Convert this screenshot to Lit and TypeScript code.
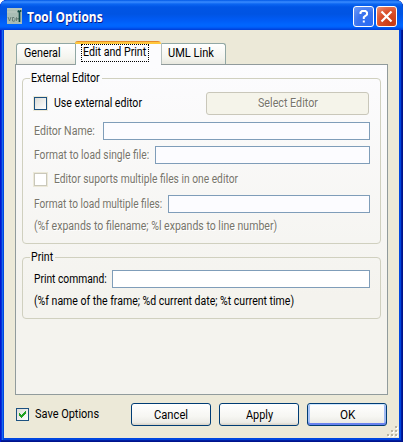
import { LitElement, html, css, svg } from "lit";
import { customElement, property, query, state } from "lit/decorators.js";
import { classMap } from "lit/directives/class-map.js";

/** One line of text, condensed or widened to a given width. */
@customElement("fit-text")
class FitText extends LitElement {
  @property() text = "";
  @property({ type: Number }) w = 50;
  @state() scale = 1;
  @query("span") span!: HTMLSpanElement;
  static styles = css`
    :host { display: block; flex: none; white-space: pre; height: 16px; line-height: 16px; }
    span { display: inline-block; transform-origin: 0 50%; }
  `;
  firstUpdated() {
    this.style.width = `${this.w}px`;
    const natural = this.span.offsetWidth;
    if (natural) this.scale = this.w / natural;
  }
  render() {
    return html`<span style="transform: scaleX(${this.scale})">${this.text}</span>`;
  }
}

@customElement("xp-check")
class XpCheck extends LitElement {
  @property({ type: Boolean }) checked = false;
  @property({ type: Boolean }) disabled = false;
  static styles = css`
    :host { display: block; flex: none; width: 13px; height: 13px; }
    .box { box-sizing: border-box; width: 13px; height: 13px; border: 1px solid #1c5180;
      background: linear-gradient(135deg, #dcdcd7, #fff); outline: 1px solid #ece9d8; }
    .off { border-color: #cac8bb; background: #fff; }
    svg { display: block; }
  `;
  render() {
    return html`<div class=${classMap({ box: true, off: this.disabled })}>
      ${this.checked
        ? html`<svg width="11" height="11" shape-rendering="crispEdges">
            ${svg`<path fill="#21a121" d="M2 4h1v3h-1zM3 5h1v3h-1zM4 6h1v3h-1zM5 5h1v3h-1zM6 4h1v3h-1zM7 3h1v3h-1zM8 2h1v3h-1z"/>`}
          </svg>`
        : ""}
    </div>`;
  }
}

@customElement("app-root")
class AppRoot extends LitElement {
  static styles = css`
    :host { display: block; width: 403px; height: 442px; background: #fff; overflow: hidden;
      font-family: Roboto, "Liberation Sans", sans-serif; font-size: 12.5px; color: #000; }
    * { box-sizing: border-box; }
    .window { width: 403px; height: 442px; border-radius: 7px 7px 0 0; overflow: hidden;
      background: #0046e0; display: flex; flex-direction: column;
      box-shadow: inset 1px 0 #0019cf, inset -1px 0 #00138c, inset 0 -1px #00138c, inset -2px 0 #001ea0, inset 0 -2px #001ea0, inset 2px 0 #0831d9, inset 3px 0 #166aee; }
    .title { height: 30px; flex: none; display: flex; padding: 0 6px 0 6px; color: #fff;
      background: linear-gradient(#0058e6 0, #3a8cff 2px, #0b66f2 4px, #0055e5 7px, #0054e3 14px, #005bf5 20px, #0066ff 25px, #0061fc 27px, #003dd7 30px);
      font: bold 14px "Open Sans", "Noto Sans", sans-serif; text-shadow: 1px 1px #0a1883; }
    .logo { display: block; margin: 8px 5px 0 1px; }
    .title fit-text { margin: 9px auto 0 0; }
    .cap { width: 21px; height: 21px; margin: 6px 0 0 2px; border: 1px solid #fff; border-radius: 3px;
      background: radial-gradient(circle at 75% 85%, #2a6cf5, #3b73ee 50%, #6f9bf7 100%); }
    .cap.close { background: radial-gradient(circle at 75% 85%, #c83a12, #da4f2b 55%, #ee9276 100%); }
    .cap svg { display: block; }
    .client { width: 395px; height: 408px; margin-left: 4px; background: #ece9d8; padding: 11px 11px 0;
      display: flex; flex-direction: column; }
    .tabs { height: 23px; display: flex; align-items: flex-end; padding-left: 1px; }
    .tab { height: 21px; border: 1px solid #91a7a4; border-bottom: 0; border-radius: 3px 3px 0 0;
      background: linear-gradient(#fff, #f4f4ee 70%, #e8e8df); padding: 1px 0 0 7px; }
    .general { width: 59px; border-right: 0; border-radius: 3px 0 0 0; }
    .uml { width: 65px; border-left-color: #b5bfbd; border-radius: 0 3px 0 0; padding-left: 6px; }
    .active { width: 86px; height: 24px; margin-bottom: -1px; z-index: 1; position: relative; background: #fcfcfe;
      border: solid #91a7a4; border-width: 0 0 0 1px; padding: 3px 0 0 5px; }
    .active::before { content: ""; position: absolute; left: -1px; right: 0; top: 0; height: 3px;
      background: linear-gradient(#e68b2c 0 1px, #ffc73c 1px); border-radius: 3px 3px 0 0; }
    .focus { width: 68px; height: 18px; border: 1px dotted #000; padding: 0 0 0 1px; }
    .focus fit-text { margin-top: -1px; }
    .panel { width: 373px; height: 331px; border: 1px solid #919b9c;
      background: linear-gradient(#fcfcfe, #f4f3ee 70%, #f4f3ee); padding: 13px 6px 0; }
    .group { width: 359px; border: 1px solid #d0d0bf; border-radius: 4px; padding: 0 10px 0 11px; }
    .first { height: 166px; }
    .second { height: 62px; margin-top: 13px; }
    .legend { display: flex; width: max-content; height: 16px; margin: -9px 0 0 -4px; padding: 0 2px 0 1px; background: #fbfbfc; }
    .second .legend { background: #f5f4f0; }
    .row { display: flex; align-items: center; height: 24px; }
    .gray { color: #77756b; text-shadow: 1px 1px #fff; }
    .row fit-text { margin-right: auto; }
    .check fit-text { margin-left: 7px; }
    .field { height: 18px; border: 1px solid #7f9db9; background: #fcfcff; flex: none; }
    .f1 { width: 267px; } .f2 { width: 215px; } .f3 { width: 202px; }
    .f4 { width: 258px; background: #fff; }
    .button { height: 23px; border: 1px solid #003c74; border-radius: 3px; flex: none;
      background: linear-gradient(#fff, #f6f6f2 60%, #ecebe6 88%, #d6d0c5);
      display: flex; align-items: center; justify-content: center; width: 80px; }
    .button fit-text { margin: 0; }
    .select { width: 163px; border-color: #c9c7ba; background: #f5f4ea; margin-right: 1px; }
    .select fit-text, .check .select fit-text { margin: 0; }
    .default { box-shadow: inset 0 1px #cee7ff, inset 0 -2px #6982ee, inset 2px 0 #a9c4f5, inset -2px 0 #a0baf2; }
    .footer { height: 43px; display: flex; padding: 8px 0 0 1px; }
    .footer xp-check { margin-top: 5px; }
    .footer > fit-text { margin: 3px 32px 0 6px; }
    .footer .button + .button { margin-left: 8px; }
    .grip { position: absolute; left: 387px; top: 426px; }
    .use { margin-top: 1px; height: 32px; }
    .multiple { margin-top: 1px; }
    .command { margin-top: 2px; }
    .hint { margin-top: -2px; }
  `;

  render() {
    return html`<div class="window">
      <div class="title">
        <svg class="logo" width="15" height="16">
          <rect width="15" height="16" fill="#a9bdb5" />
          <path d="M0 1h15M0 4h10" stroke="#bdcac3" />
          <path d="M1 9l1.5 4L4 9M5.5 13V9.5h1.5l1 1v2l-1 .8zM9.5 13V9.5l1.500 2L12 10" fill="none" stroke="#596f69" stroke-width=".8" />
          <path d="M10.500 3.500h1.500M12.500 3v11M13.500 2v2M11 2.500l1 1.500" fill="none" stroke="#144b46" stroke-width="1.700" />
        </svg>
        <fit-text text="Tool Options" w="76"></fit-text>
        <div class="cap"><svg width="19" height="19"><path d="M6.500 7V5.500l1.500-1.500h3.500l1.500 1.500v2L9.800 10.200V12M9.800 13.500v2" fill="none" stroke="#fff" stroke-width="2" /></svg></div>
        <div class="cap close"><svg width="19" height="19"><path d="M4.500 4.500l10 10M14.500 4.500l-10 10" stroke="#fff" stroke-width="2.200" /></svg></div>
      </div>
      <div class="client">
        <div class="tabs">
          <div class="tab general"><fit-text text="General" w="37"></fit-text></div>
          <div class="tab active"><div class="focus"><fit-text text="Edit and Print" w="63"></fit-text></div></div>
          <div class="tab uml"><fit-text text="UML Link" w="46"></fit-text></div>
        </div>
        <div class="panel">
          <div class="group first">
            <div class="legend"><fit-text text="External Editor" w="69"></fit-text></div>
            <div class="row check use">
              <xp-check></xp-check><fit-text text="Use external editor" w="88"></fit-text>
              <div class="button select gray"><fit-text text="Select Editor" w="60"></fit-text></div>
            </div>
            <div class="row gray"><fit-text text="Editor Name:" w="61"></fit-text><div class="field f1"></div></div>
            <div class="row gray"><fit-text text="Format to load single file:" w="115"></fit-text><div class="field f2"></div></div>
            <div class="row check gray"><xp-check disabled></xp-check><fit-text text="Editor suports multiple files in one editor" w="184"></fit-text></div>
            <div class="row gray multiple"><fit-text text="Format to load multiple files:" w="128"></fit-text><div class="field f3"></div></div>
            <div class="row gray hint"><fit-text text="(%f expands to filename; %l expands to line number)" w="243"></fit-text></div>
          </div>
          <div class="group second">
            <div class="legend"><fit-text text="Print" w="22"></fit-text></div>
            <div class="row command"><fit-text text="Print command:" w="73"></fit-text><div class="field f4"></div></div>
            <div class="row hint"><fit-text text="(%f name of the frame; %d current date; %t current time)" w="260"></fit-text></div>
          </div>
        </div>
        <div class="footer">
          <xp-check checked></xp-check><fit-text text="Save Options" w="64"></fit-text>
          <div class="button"><fit-text text="Cancel" w="34"></fit-text></div>
          <div class="button"><fit-text text="Apply" w="27"></fit-text></div>
          <div class="button default"><fit-text text="OK" w="15"></fit-text></div>
        </div>
      </div>
      <svg class="grip" width="11" height="11" shape-rendering="crispEdges">
        <path fill="#fff" d="M9 1h2v2h-2zM5 5h2v2h-2zM9 5h2v2h-2zM1 9h2v2h-2zM5 9h2v2h-2zM9 9h2v2h-2z" />
        <path fill="#b8b4a3" d="M8 0h2v2h-2zM4 4h2v2h-2zM8 4h2v2h-2zM0 8h2v2h-2zM4 8h2v2h-2zM8 8h2v2h-2z" />
      </svg>
    </div>`;
  }
}
